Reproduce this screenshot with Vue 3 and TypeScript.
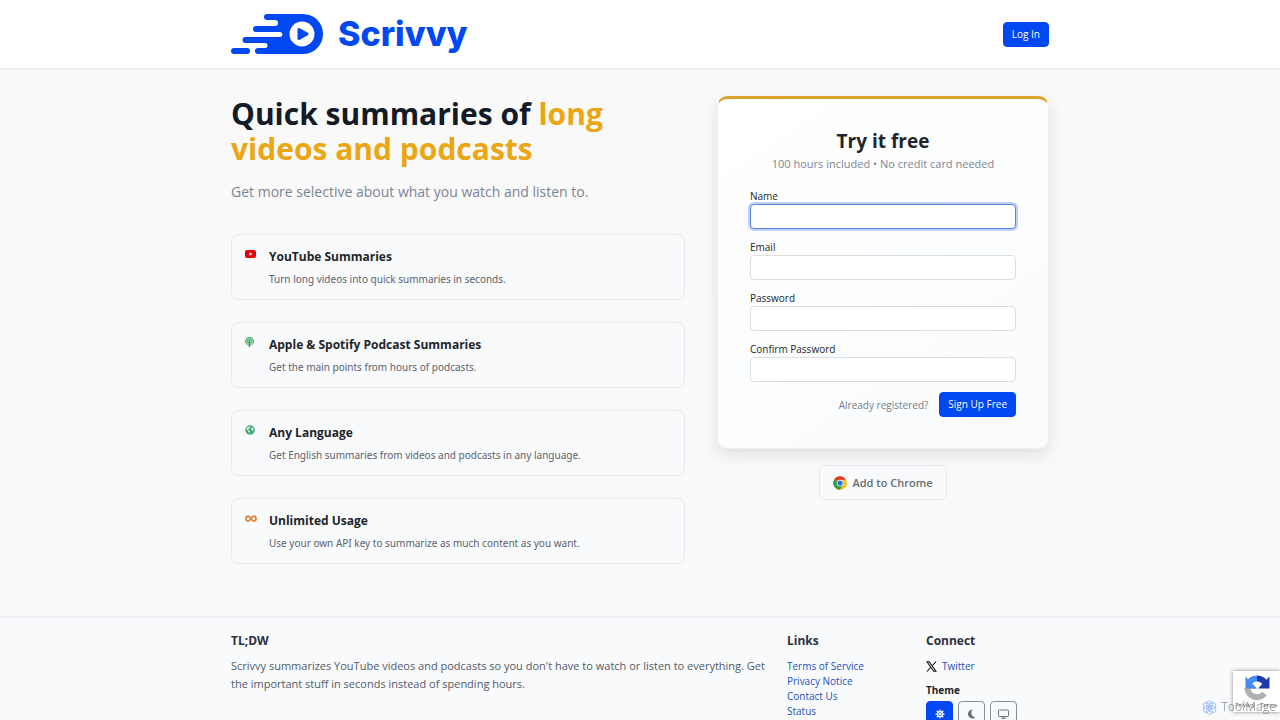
<script setup lang="ts">
import { onMounted, ref } from 'vue'

interface Feature {
  icon: 'youtube' | 'podcast' | 'globe' | 'infinity'
  title: string
  text: string
}

interface Field {
  id: string
  label: string
  type: string
}

const features: Feature[] = [
  { icon: 'youtube', title: 'YouTube Summaries', text: 'Turn long videos into quick summaries in seconds.' },
  { icon: 'podcast', title: 'Apple & Spotify Podcast Summaries', text: 'Get the main points from hours of podcasts.' },
  { icon: 'globe', title: 'Any Language', text: 'Get English summaries from videos and podcasts in any language.' },
  { icon: 'infinity', title: 'Unlimited Usage', text: 'Use your own API key to summarize as much content as you want.' },
]

const fields: Field[] = [
  { id: 'name', label: 'Name', type: 'text' },
  { id: 'email', label: 'Email', type: 'email' },
  { id: 'password', label: 'Password', type: 'password' },
  { id: 'confirm', label: 'Confirm Password', type: 'password' },
]

const links: string[] = ['Terms of Service', 'Privacy Notice', 'Contact Us', 'Status']

const values = ref<Record<string, string>>({ name: '', email: '', password: '', confirm: '' })
const theme = ref<'light' | 'dark' | 'auto'>('light')
const form = ref<HTMLFormElement | null>(null)

onMounted(() => {
  form.value?.querySelector('input')?.focus({ preventScroll: true })
})
</script>

<template>
  <div class="page">
    <header class="topbar">
      <div class="container topbar-row">
        <a class="brand" href="#">
          <svg class="brand-mark" viewBox="0 0 92 40" aria-hidden="true">
            <path
              fill="#0147f2"
              d="M36 0H72a20 20 0 0 1 0 40H27a3 3 0 0 1 0-6H34a2.500 2.500 0 0 0 0-5H14.500a3 3 0 0 1 0-6H49a2.500 2.500 0 0 0 0-5H25a3 3 0 0 1 0-6H44a2.500 2.500 0 0 0 0-6H36a3 3 0 0 1-3-3a3 3 0 0 1 3-3z"
            />
            <rect x="0" y="34" width="19" height="6" rx="3" fill="#0147f2" />
            <circle cx="71" cy="20" r="12.500" fill="#fff" />
            <path d="M68 15.500v9l8-4.500z" fill="#0147f2" stroke="#0147f2" stroke-width="3" stroke-linejoin="round" />
          </svg>
          <span class="brand-name">Scrivvy</span>
        </a>
        <button class="btn" type="button">Log In</button>
      </div>
    </header>

    <main class="container hero">
      <section class="pitch">
        <h1>Quick summaries of <span class="accent">long videos and podcasts</span></h1>
        <p class="lead">Get more selective about what you watch and listen to.</p>
        <div class="features">
          <article v-for="f in features" :key="f.title" class="feature">
            <span class="feature-icon">
              <svg v-if="f.icon === 'youtube'" width="11" height="8" viewBox="0 0 22 16" aria-hidden="true">
                <rect width="22" height="16" rx="4" fill="#e00008" />
                <path d="M9 4.500v7l6-3.500z" fill="#fff" />
              </svg>
              <svg v-else-if="f.icon === 'podcast'" width="9" height="10" viewBox="0 0 18 20" fill="none" stroke="#4fae6e" aria-hidden="true">
                <circle cx="9" cy="8.500" r="8" fill="#a9d9b8" stroke="none" />
                <path d="M5 15.500A8 8 0 1 1 13 15.500M6 11.500a4.500 4.500 0 1 1 6 0" stroke-width="2" />
                <circle cx="9" cy="8" r="2" fill="#3a9a5a" stroke="none" />
                <path d="M9 11v7.500" stroke="#3a9a5a" stroke-width="3.500" stroke-linecap="round" />
              </svg>
              <svg v-else-if="f.icon === 'globe'" width="10" height="10" viewBox="0 0 20 20" aria-hidden="true">
                <circle cx="10" cy="10" r="9.500" fill="#3fab72" />
                <path d="M4 5l4-2 2 1-1 3-3 1v1l3 2 1 2-1 3-2-2-1-3-3-2zM13 5l3 1 1 4-2 2-2-2-1-2z" fill="#dff3e8" />
              </svg>
              <svg v-else width="12" height="7" viewBox="0 0 24 14" fill="none" stroke="#e0813a" stroke-width="3.500" aria-hidden="true">
                <path d="M12 7C9.500 3.500 8.500 2 6.500 2a4.500 5 0 0 0 0 10c2 0 3-1.500 5.500-5s3.500-5 5.500-5a4.500 5 0 0 1 0 10c-2 0-3-1.500-5.500-5z" />
              </svg>
            </span>
            <div>
              <h2>{{ f.title }}</h2>
              <p>{{ f.text }}</p>
            </div>
          </article>
        </div>
      </section>

      <section class="signup">
        <form ref="form" class="card" @submit.prevent>
          <h2>Try it free</h2>
          <p class="card-note">100 hours included • No credit card needed</p>
          <div class="fields">
            <div v-for="field in fields" :key="field.id" class="field">
              <label :for="field.id">{{ field.label }}</label>
              <input :id="field.id" v-model="values[field.id]" :type="field.type" />
            </div>
          </div>
          <div class="actions">
            <a class="muted-link" href="#">Already registered?</a>
            <button class="btn" type="submit">Sign Up Free</button>
          </div>
        </form>
        <a class="chrome" href="#">
          <svg width="14" height="14" viewBox="0 0 48 48" aria-hidden="true">
            <circle cx="24" cy="24" r="23" fill="#fbc116" />
            <path d="M24 24L4 12.500A23 23 0 0 1 44 12.500z" fill="#e33b2e" />
            <path d="M4 12.500A23 23 0 0 0 24 47L34 30 24 24z" fill="#2a9d48" />
            <path d="M24 12.500H44A23 23 0 0 1 24 47L34 30z" fill="#fbc116" />
            <circle cx="24" cy="24" r="11.500" fill="#fff" />
            <circle cx="24" cy="24" r="9" fill="#2f6fdc" />
          </svg>
          <span>Add to Chrome</span>
        </a>
      </section>
    </main>

    <footer class="footer">
      <div class="container footer-grid">
        <section>
          <h3>TL;DW</h3>
          <p class="about">
            Scrivvy summarizes YouTube videos and podcasts so you don't have to watch or listen to everything. Get the
            important stuff in seconds instead of spending hours.
          </p>
        </section>
        <nav aria-label="Links">
          <h3>Links</h3>
          <ul class="links">
            <li v-for="l in links" :key="l"><a href="#">{{ l }}</a></li>
          </ul>
        </nav>
        <section>
          <h3>Connect</h3>
          <a class="social" href="#">
            <svg width="11" height="11" viewBox="0 0 22 22" fill="none" stroke="#111" aria-hidden="true">
              <path d="M2 1.500H6.500L20 20.500H15.500z" stroke-width="2.200" />
              <path d="M20 1L12.500 9.500M9.500 12.500L2 21" stroke-width="2.200" />
            </svg>
            <span>Twitter</span>
          </a>
          <h4>Theme</h4>
          <div class="themes">
            <button class="theme" :class="{ active: theme === 'light' }" type="button" aria-label="Light" @click="theme = 'light'">
              <svg width="10" height="10" viewBox="0 0 20 20" fill="none" stroke="currentColor" stroke-width="2.500" aria-hidden="true">
                <circle cx="10" cy="10" r="5" />
                <path d="M10 1v4M10 15v4M1 10h4M15 10h4M3.500 3.500l3 3M13.500 13.500l3 3M16.500 3.500l-3 3M6.500 13.500l-3 3" />
                <circle cx="10" cy="10" r="2.500" fill="currentColor" stroke="none" />
              </svg>
            </button>
            <button class="theme" :class="{ active: theme === 'dark' }" type="button" aria-label="Dark" @click="theme = 'dark'">
              <svg width="9" height="10" viewBox="0 0 18 20" fill="currentColor" aria-hidden="true">
                <path d="M11 1A9 9 0 1 0 17 16.500C10 17 6 8 11 1z" />
              </svg>
            </button>
            <button class="theme" :class="{ active: theme === 'auto' }" type="button" aria-label="System" @click="theme = 'auto'">
              <svg width="11" height="10" viewBox="0 0 22 20" fill="none" stroke="currentColor" stroke-width="2" aria-hidden="true">
                <rect x="1" y="2" width="20" height="13" rx="1.500" />
                <path d="M11 15v3M6 18.500h10" />
              </svg>
            </button>
          </div>
        </section>
      </div>
    </footer>

    <aside class="captcha">
      <svg width="26" height="26" viewBox="0 0 52 52" fill="none" stroke-width="12" aria-hidden="true">
        <path d="M7 26A19 19 0 0 0 41 37" stroke="#b0b0b0" />
        <path d="M0 28L13 15 25 28z" fill="#b0b0b0" />
        <path d="M9 18A19 19 0 0 1 26 7" stroke="#4a8af4" />
        <path d="M3 3V27H26z" fill="#4a8af4" />
        <path d="M26 7A19 19 0 0 1 44 20" stroke="#1c3aa9" />
        <path d="M51 3V27H28z" fill="#1c3aa9" />
      </svg>
      <span>Privacy - Terms</span>
    </aside>
    <div class="watermark">
      <svg width="15" height="15" viewBox="0 0 30 30" fill="none" stroke="#8fb4ef" stroke-width="2" aria-hidden="true">
        <ellipse cx="15" cy="9" rx="6" ry="7.500" />
        <ellipse cx="15" cy="9" rx="6" ry="7.500" transform="rotate(60 15 15)" />
        <ellipse cx="15" cy="9" rx="6" ry="7.500" transform="rotate(120 15 15)" />
        <ellipse cx="15" cy="9" rx="6" ry="7.500" transform="rotate(180 15 15)" />
        <ellipse cx="15" cy="9" rx="6" ry="7.500" transform="rotate(240 15 15)" />
        <ellipse cx="15" cy="9" rx="6" ry="7.500" transform="rotate(300 15 15)" />
      </svg>
      <span>ToolMage</span>
    </div>
  </div>
</template>

<style>
body {
  background: #f9f9f9;
}
</style>

<style scoped>
.page {
  font-family: 'Open Sans', 'Noto Sans', sans-serif;
  font-size: 10px;
  color: #212529;
  background: #f9f9f9;
}
.page * {
  box-sizing: border-box;
}
h1, h2, h3, h4, p, ul {
  margin: 0;
  padding: 0;
}
a {
  color: #2450b8;
  text-decoration: none;
}
.container {
  max-width: 818px;
  margin: 0 auto;
}
.topbar {
  background: #fff;
  border-bottom: 2px solid #eeeff0;
}
.topbar-row {
  display: flex;
  align-items: center;
  justify-content: space-between;
  height: 68px;
}
.brand {
  display: flex;
  align-items: center;
  gap: 15px;
}
.brand-mark {
  width: 92px;
  height: 40px;
}
.brand-name {
  font-family: Inter, sans-serif;
  font-weight: 800;
  font-size: 34px;
  line-height: 40px;
  color: #0147f2;
}
.btn {
  font: inherit;
  line-height: 15px;
  padding: 4px 8px;
  border: 1px solid #0147f2;
  border-radius: 4px;
  background: #0147f2;
  color: #fff;
  white-space: nowrap;
}
.hero {
  display: grid;
  grid-template-columns: 454fr 332fr;
  gap: 32px;
  padding: 26px 0 52px;
}
h1 {
  font-size: 30px;
  line-height: 35px;
  font-weight: 700;
  color: #131a28;
}
.accent {
  color: #eaa613;
}
.lead {
  margin-top: 16px;
  font-size: 14px;
  line-height: 20px;
  color: #7b8594;
}
.features {
  display: grid;
  gap: 22px;
  margin-top: 32px;
}
.feature {
  display: grid;
  grid-template-columns: 24px 1fr;
  padding: 12px 13px;
  border: 1px solid #e7ebf0;
  border-radius: 8px;
  background: #f9fafc;
}
.feature-icon {
  display: flex;
  align-items: center;
  height: 14px;
}
.feature h2 {
  font-size: 12px;
  line-height: 20px;
  font-weight: 700;
}
.feature p {
  margin-top: 4px;
  font-family: 'Noto Sans', 'Open Sans', sans-serif;
  font-size: 10px;
  line-height: 16px;
  color: #5b636c;
}
.signup {
  display: flex;
  flex-direction: column;
  align-items: center;
  gap: 16px;
}
.card {
  width: 100%;
  padding: 30px 32px 31px;
  border: 1px solid #edf0f3;
  border-top: 3px solid #dda32a;
  border-radius: 11px;
  background: linear-gradient(145deg, #fff, #f9fbfd);
  box-shadow: 0 6px 16px rgba(0, 0, 0, 0.1);
}
.card h2 {
  font-size: 19px;
  line-height: 24px;
  text-align: center;
}
.card-note {
  margin: 3px 0 17px;
  font-size: 11px;
  line-height: 16px;
  text-align: center;
  color: #7b8594;
}
.fields {
  display: grid;
  gap: 11px;
  margin-bottom: 10px;
}
.field label {
  display: block;
  line-height: 15px;
}
.field input {
  display: block;
  width: 100%;
  height: 25px;
  padding: 4px 8px;
  font: inherit;
  border: 1px solid #dadee2;
  border-radius: 4px;
  background: #fff;
}
.field input:focus {
  outline: none;
  border-color: #5a83d8;
  box-shadow: 0 0 0 2px #bfd0fa;
  caret-color: transparent;
}
.actions {
  display: flex;
  align-items: center;
  justify-content: flex-end;
  gap: 11px;
}
.muted-link {
  color: #757c84;
}
.chrome {
  display: flex;
  align-items: center;
  gap: 5px;
  padding: 8px 13px;
  border: 1px solid #e5e9ee;
  border-radius: 7px;
  background: #f9fafc;
  color: #666d75;
  font-size: 11px;
  line-height: 17px;
  font-weight: 600;
}
.footer {
  border-top: 2px solid #edeff2;
  background: #f9fafc;
}
.footer-grid {
  display: grid;
  grid-template-columns: 540fr 123fr 123fr;
  gap: 16px;
  padding: 14px 0 24px;
}
h3 {
  font-size: 12px;
  line-height: 18px;
  color: #2a3140;
}
.about {
  margin-top: 7px;
  font-size: 11px;
  line-height: 18px;
  color: #525b66;
}
.links {
  margin-top: 9px;
  list-style: none;
  line-height: 15px;
}
.social {
  display: flex;
  align-items: center;
  gap: 5px;
  margin-top: 9px;
  line-height: 15px;
}
h4 {
  margin-top: 9px;
  font-size: 10px;
  line-height: 15px;
}
.themes {
  display: flex;
  gap: 5px;
  margin-top: 3px;
}
.theme {
  display: flex;
  align-items: center;
  justify-content: center;
  width: 27px;
  height: 25px;
  padding: 0;
  border: 1px solid #888e94;
  border-radius: 4px;
  background: transparent;
  color: #6c757d;
}
.theme.active {
  border-color: #0147f2;
  background: #0147f2;
  color: #fff;
}
.captcha {
  position: fixed;
  right: 0;
  bottom: 8px;
  width: 47px;
  height: 41px;
  padding-top: 4px;
  background: #fff;
  box-shadow: 0 0 4px #888;
  text-align: center;
  overflow: hidden;
}
.captcha svg {
  display: block;
  margin: 0 auto;
}
.captcha span {
  display: block;
  font-size: 6px;
  line-height: 8px;
  color: #555;
  white-space: nowrap;
}
.watermark {
  position: fixed;
  right: 4px;
  bottom: 5px;
  display: flex;
  align-items: center;
  gap: 4px;
  font-size: 12px;
  line-height: 16px;
  color: #8d9196;
  opacity: 0.8;
}
</style>
